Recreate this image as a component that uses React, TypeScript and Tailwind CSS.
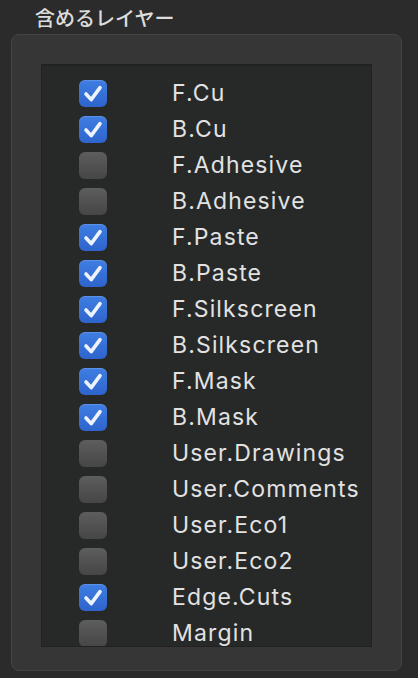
const layers: [string, boolean][] = [
  ['F.Cu', true],
  ['B.Cu', true],
  ['F.Adhesive', false],
  ['B.Adhesive', false],
  ['F.Paste', true],
  ['B.Paste', true],
  ['F.Silkscreen', true],
  ['B.Silkscreen', true],
  ['F.Mask', true],
  ['B.Mask', true],
  ['User.Drawings', false],
  ['User.Comments', false],
  ['User.Eco1', false],
  ['User.Eco2', false],
  ['Edge.Cuts', true],
  ['Margin', false],
];

function Box({ on }: { on: boolean }) {
  if (on) {
    return (
      <div className="w-[28px] h-[27px] rounded-[6px] bg-gradient-to-b from-[#3f7ee3] to-[#2e64cc] shadow-[inset_0_1px_0_rgba(255,255,255,0.15)]">
        <svg width="28" height="27" viewBox="0 0 28 27">
          <polyline points="7,14 12.2,19.6 21,7.6" fill="none" stroke="#eef3fb" strokeWidth="3.6" strokeLinecap="round" strokeLinejoin="round" />
        </svg>
      </div>
    );
  }
  return <div className="w-[28px] h-[27px] rounded-[6px] bg-gradient-to-b from-[#5d5d5d] to-[#464646]" />;
}

export default function App() {
  return (
    <div className="w-[418px] h-[678px] bg-[#2b2b2b] overflow-hidden" style={{ fontFamily: 'Inter, "Noto Sans CJK JP", sans-serif' }}>
      <div className="pl-[35px] pt-[6px] h-[34px] text-[20px] leading-[24px] font-medium text-[#dcdcdc]" style={{ fontFamily: '"Noto Sans CJK JP", sans-serif' }}>
        含めるレイヤー
      </div>
      <div className="ml-[11px] w-[391px] h-[637px] rounded-[8px] bg-[#363636] border border-[#444444] pt-[29px] pl-[29px]">
        <div className="w-[331px] h-[583px] bg-[#272828] border-t-2 border-l border-r border-b border-[#222222] overflow-hidden pt-[9px]">
          {layers.map(([name, on]) => (
            <div key={name} className="h-[36px] flex items-center">
              <div className="ml-[37px]">
                <Box on={on} />
              </div>
              <div className="ml-[65px] text-[23px] tracking-[0.05em] text-[#e2e2e2] leading-none">{name}</div>
            </div>
          ))}
        </div>
      </div>
    </div>
  );
}
